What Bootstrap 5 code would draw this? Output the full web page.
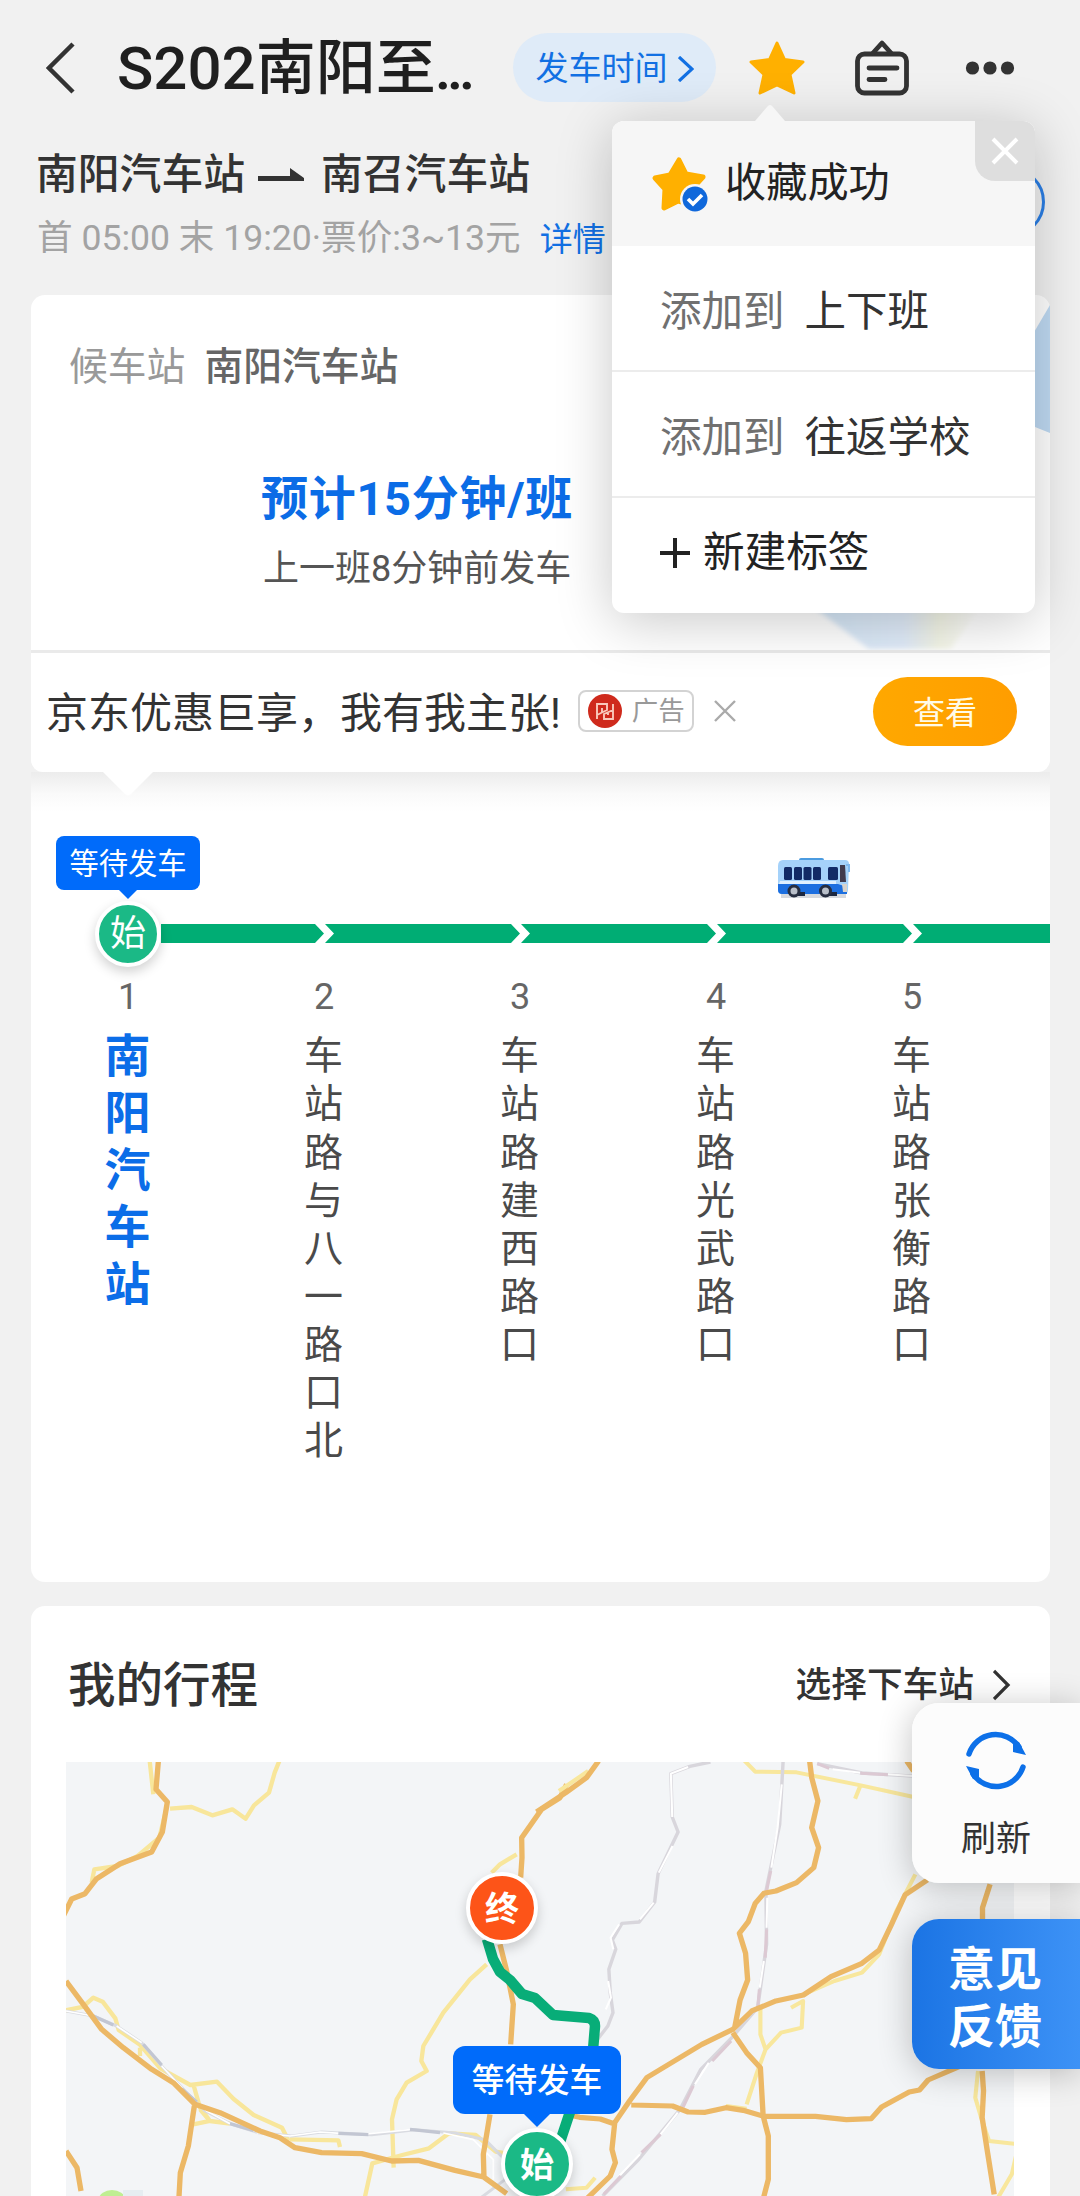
<!DOCTYPE html>
<html lang="zh-CN">
<head>
  <meta charset="UTF-8">
  <meta name="viewport" content="width=device-width, initial-scale=1.0">
  <title>S202 实时公交</title>
  <link href="https://cdn.jsdelivr.net/npm/bootstrap@5.3.0/dist/css/bootstrap.min.css" rel="stylesheet">
  <style>
    body {
      width: 1080px;
      height: 2196px;
      overflow: hidden;
      background: #f1f1f1;
      color: #333;
      font-family: Roboto, "Noto Sans CJK SC", sans-serif;
      line-height: 1;
    }
    svg { display: block; flex: none; }
    .fw-mid { font-weight: 500; }
    .blue { color: #1270e3; }

    .topbar { height: 135px; padding-left: 46px; }
    .line-title { font-size: 60px; color: #1f1f1f; width: 358px; margin-left: 41px; padding-top: 2px; }
    .line-title .dots { letter-spacing: -4.6px; margin-left: -1px; }
    .time-pill { width: 203px; height: 69px; margin-left: 38px; padding-top: 2px; font-size: 33px; background: #dfebf8; gap: 10px; }
    .route-row { height: 76px; padding: 4px 0 0 36px; font-size: 41.8px; }
    .info-row { height: 54px; padding: 2px 0 0 37px; font-size: 35.6px; color: #a3a3a3; }
    .info-row .blue { font-size: 33px; margin-left: 19px; }

    .page-body { padding: 30px 30px 0 31px; }
    .wait-card { height: 477px; border-radius: 14px 14px 12px 12px; }
    .wait-top { height: 355px; padding-top: 42px; }
    .wait-label { height: 60px; padding-left: 38px; font-size: 38.8px; color: #999; gap: 19px; }
    .wait-label b { font-weight: 500; color: #666; }
    .estimate { margin-top: 68px; padding-left: 230px; height: 66px; font-size: 47px; color: #0b6ce6; font-weight: 700; letter-spacing: .7px; }
    .last-bus { padding-left: 232px; height: 76px; font-size: 36px; color: #555; }
    .ad-row { height: 119px; border-top: 3px solid #eaeaea; padding: 0 33px 0 15px; font-size: 42px; }
    .ad-text { padding-top: 6px; }
    .ad-tag { width: 116px; height: 42px; border: 2px solid #d3d3d3; border-radius: 8px; font-size: 26.500px; color: #999; gap: 10px; padding-left: 8px; margin-left: 17px; }
    .ad-btn { width: 144px; height: 69px; padding-top: 3px; font-size: 32px; background: linear-gradient(90deg, #ffa800, #ff9d00); color: #fffbe8; }
    .ad-tail { left: 71px; top: 476px; z-index: 2; }
    .deco { left: 780px; top: 0; }

    .stops-card { height: 810px; border-radius: 0 0 14px 14px; background: linear-gradient(#ececec, #fafafa 22px, #fff 40px); }
    .stops-head { height: 200px; }
    .stop-list { width: 980px; margin-left: -1px; }
    .stop-item { width: 196px; }
    .stop-no { height: 48px; padding-top: 1px; font-size: 36px; color: #666; }
    .stop-name { font-size: 39px; color: #4a4a4a; writing-mode: vertical-rl; text-orientation: upright; line-height: 40px; letter-spacing: 9.1px; margin: 15px 9px 0 0; }
    .stop-name.current { font-size: 46px; color: #0b6de8; letter-spacing: 11px; font-weight: 700; margin-top: 12px; }
    .wait-bubble { left: 25px; top: 64px; width: 144px; height: 54px; padding-top: 3px; border-radius: 8px; font-size: 29.3px; background: #006bfa; }
    .bubble-tail { left: 50%; top: 100%; transform: translateX(-50%); }
    .round-pin { border-radius: 50%; border: 4px solid #fff; background: #1bb986; color: #fff; box-shadow: 0 5px 12px rgba(0, 0, 0, .18); }
    .start-pin { left: 64px; top: 129px; width: 66px; height: 66px; font-size: 36px; }

    .trip-card { height: 620px; margin-top: 24px; border-radius: 14px 14px 0 0; padding: 0 36px 0 35px; }
    .trip-head { height: 156px; padding-left: 2px; }
    .trip-title { font-size: 47.5px; font-weight: 500; padding-top: 6px; }
    .choose { font-size: 35.7px; font-weight: 500; gap: 19px; padding: 3px 3px 0 0; }
    .map-end { left: 400px; top: 110px; width: 72px; height: 72px; padding-top: 1px; font-size: 34px; background: #fd5418; }
    .map-start { left: 435px; top: 366px; width: 72px; height: 72px; padding-top: 2px; font-size: 34px; }
    .map-bubble { left: 387px; top: 284px; width: 168px; height: 68px; padding-top: 3px; border-radius: 12px; font-size: 32.6px; background: #006bfa; }

    .fav-panel { left: 612px; top: 121px; width: 423px; height: 492px; border-radius: 12px; background: #fff; box-shadow: 0 8px 55px rgba(0, 0, 0, .22); z-index: 5; }
    .fav-title { height: 125px; padding-left: 39px; background: #f6f6f6; border-radius: 12px 12px 0 0; color: #222; gap: 16px; font-size: 41.2px; }
    .fav-item { height: 126px; padding: 7px 0 0 48px; font-size: 41.5px; border-bottom: 2px solid #ececec; gap: 20px; }
    .fav-item .grey { color: #707070; }
    .fav-new { height: 106px; padding: 3px 0 0 48px; gap: 13px; font-size: 41.6px; color: #222; }
    .fav-close { right: 0; top: 0; width: 60px; height: 60px; background: #dedede; border-radius: 0 12px 0 20px; }
    .fav-tip { left: 141px; top: -16px; }
    .ring-btn { left: 975px; top: 167px; width: 70px; height: 70px; border: 3px solid #2b7fe6; border-radius: 50%; }

    .side-btn { right: 0; width: 168px; border-radius: 27px 0 0 27px; box-shadow: 0 4px 34px rgba(0, 0, 0, .24); }
    .refresh { top: 1703px; height: 180px; background: rgba(252, 252, 252, .97); font-size: 35px; padding-top: 26px; gap: 31px; }
    .feedback { top: 1919px; height: 150px; padding: 7px 2px 0 0; background: linear-gradient(90deg, #1b74e4, #3d92f6); font-size: 47px; line-height: 57px; }
  </style>
</head>
<body class="position-relative">

<header>
  <div class="topbar d-flex align-items-center">
    <svg width="30" height="52" viewBox="0 0 30 52" fill="none" stroke="#333" stroke-width="4.5"><path d="M27 2L3 26l24 24"/></svg>
    <div class="line-title fw-mid text-nowrap">S202南阳至<span class="dots">...</span></div>
    <div class="time-pill blue rounded-pill d-flex align-items-center justify-content-center">发车时间
      <svg width="16" height="26" viewBox="0 0 16 26" fill="none" stroke="#1270e3" stroke-width="3.2"><path d="M1 1l13 12L1 25"/></svg>
    </div>
    <svg width="56" height="54" viewBox="0 0 56 54" style="margin-left:33px"><path d="M28 2l7.5 16.500L54 21 41 33.500l4 18.500L28 44 11 52l4-18.500L2 21l18.500-2.500z" fill="#ffb000" stroke="#ffb000" stroke-width="3" stroke-linejoin="round"/></svg>
    <svg width="56" height="56" viewBox="0 0 56 56" fill="none" stroke="#333" stroke-width="4.800" stroke-linejoin="round" stroke-linecap="round" style="margin-left:49px"><rect x="3.500" y="14" width="49" height="39" rx="7"/><path d="M19 13l9-10 9 10M15 28h28M15 39.500h16"/></svg>
    <svg width="50" height="14" viewBox="0 0 50 14" fill="#333" style="margin-left:55px"><circle cx="7.500" cy="7" r="6.600"/><circle cx="25" cy="7" r="6.600"/><circle cx="42.500" cy="7" r="6.600"/></svg>
  </div>
  <div class="route-row fw-mid d-flex align-items-center">
    <span>南阳汽车站</span>
    <svg width="46" height="14" viewBox="0 0 46 14" fill="#333" style="margin:0 17px 0 13px"><path d="M0 8h32V0l14 10v3H0z"/></svg>
    <span>南召汽车站</span>
  </div>
  <div class="info-row d-flex align-items-center">
    <span class="text-nowrap">首 05:00 末 19:20·票价:3~13元</span><span class="blue">详情</span>
  </div>
</header>
<div class="ring-btn position-absolute"></div>

<main class="page-body">
  <section class="wait-card bg-white position-relative">
    <svg class="deco position-absolute" width="239" height="355" viewBox="0 0 239 355">
      <defs>
        <filter id="soft"><feGaussianBlur stdDeviation="2.500"/></filter>
        <linearGradient id="glow"><stop offset="0" stop-color="#d3e6f7"/><stop offset=".55" stop-color="#e0ebf9"/><stop offset=".75" stop-color="#f3f5e6"/><stop offset="1" stop-color="#fff"/></linearGradient>
      </defs>
      <path d="M239 10v128l-20-8V44z" fill="#bfdaf3"/>
      <path d="M0 310h170l-30 44H58z" fill="url(#glow)" filter="url(#soft)"/>
    </svg>
    <div class="wait-top">
      <div class="wait-label d-flex align-items-center"><span>候车站</span><b>南阳汽车站</b></div>
      <div class="estimate d-flex align-items-center">预计15分钟/班</div>
      <div class="last-bus d-flex align-items-center">上一班8分钟前发车</div>
    </div>
    <div class="ad-row d-flex align-items-center">
      <span class="ad-text text-nowrap">京东优惠巨享，我有我主张!</span>
      <div class="ad-tag d-flex align-items-center">
        <svg width="34" height="34" viewBox="0 0 34 34"><circle cx="17" cy="17" r="17" fill="#cf2a1c"/><path d="M9 25V10h10v6l-10 5M14 14v4M25 10v15h-9v-5l9-4M20 21v-3" fill="none" stroke="#f9c9bb" stroke-width="1.900"/></svg>广告
      </div>
      <svg width="24" height="24" viewBox="0 0 24 24" stroke="#aaa" stroke-width="2.400" style="margin-left:19px"><path d="M2 2l20 20M22 2L2 22"/></svg>
      <div class="ad-btn rounded-pill ms-auto d-flex align-items-center justify-content-center">查看</div>
    </div>
    <svg class="ad-tail position-absolute" width="52" height="26" viewBox="0 0 52 26"><path d="M0 0h52L29 23q-3 3-6 0z" fill="#fff"/></svg>
  </section>

  <section class="stops-card position-relative">
    <div class="stops-head position-relative">
      <!-- driving line, one arrow per stop -->
      <svg class="position-absolute" style="left:130px;top:85px" width="889" height="86" viewBox="0 0 889 86">
        <g fill="#00ad74">
          <path d="M0 67h154l9 9.500-9 9.500H0z"/>
          <path d="M164 67h186l9 9.500-9 9.500H164l9-9.500z"/>
          <path d="M360 67h186l9 9.500-9 9.500H360l9-9.500z"/>
          <path d="M556 67h186l9 9.500-9 9.500H556l9-9.500z"/>
          <path d="M752 67h137v19H752l9-9.500z"/>
        </g>
        <g transform="translate(616 0)">
          <rect x="4" y="37" width="65" height="4" fill="#d6d9de"/>
          <rect x="22" y="1" width="25" height="6" rx="2" fill="#4b9be0"/>
          <path d="M6 3h62q4 0 4 4l-1 26q0 4-4 4H5q-4 0-4-4V9q0-6 5-6z" fill="#a5d2fa"/>
          <path d="M1 27h60l9 3v7H5q-4 0-4-4z" fill="#1c6fe0"/>
          <path d="M3 24h56v3H2z" fill="#dff0ff"/>
          <path d="M63 8h5l1 17h-6z" fill="#413b4e"/>
          <path d="M69 8h3v7" fill="none" stroke="#7fb9f0" stroke-width="2"/>
          <path d="M65 27h5v8h-4z" fill="#d7d3cd"/>
          <g fill="#122a66"><rect x="7" y="10" width="8" height="13" rx="1.500"/><rect x="17" y="10" width="8" height="13" rx="1.500"/><rect x="26.500" y="10" width="8" height="13" rx="1.500"/><rect x="36" y="10" width="8" height="13" rx="1.500"/><rect x="51" y="10" width="10" height="13" rx="1.500"/></g>
          <path d="M20 37h8M52 37h8" stroke="#1b2740" stroke-width="4"/>
          <g fill="#b9bfc9" stroke="#272e40" stroke-width="3"><circle cx="17" cy="34" r="5"/><circle cx="48.500" cy="34" r="5"/></g>
        </g>
      </svg>
      <div class="wait-bubble position-absolute text-white d-flex align-items-center justify-content-center">等待发车
        <svg class="bubble-tail position-absolute" width="18" height="9" viewBox="0 0 18 9"><path d="M0 0h18L9 9z" fill="#006bfa"/></svg>
      </div>
      <div class="round-pin start-pin position-absolute d-flex align-items-center justify-content-center">始</div>
    </div>
    <div class="stop-list d-flex">
      <div class="stop-item d-flex flex-column align-items-center"><div class="stop-no d-flex align-items-center">1</div><div class="stop-name current">南阳汽车站</div></div>
      <div class="stop-item d-flex flex-column align-items-center"><div class="stop-no d-flex align-items-center">2</div><div class="stop-name">车站路与八一路口北</div></div>
      <div class="stop-item d-flex flex-column align-items-center"><div class="stop-no d-flex align-items-center">3</div><div class="stop-name">车站路建西路口</div></div>
      <div class="stop-item d-flex flex-column align-items-center"><div class="stop-no d-flex align-items-center">4</div><div class="stop-name">车站路光武路口</div></div>
      <div class="stop-item d-flex flex-column align-items-center"><div class="stop-no d-flex align-items-center">5</div><div class="stop-name">车站路张衡路口</div></div>
    </div>
  </section>

  <section class="trip-card bg-white">
    <div class="trip-head d-flex align-items-center justify-content-between">
      <span class="trip-title">我的行程</span>
      <span class="choose d-flex align-items-center">选择下车站
        <svg width="18" height="32" viewBox="0 0 18 32" fill="none" stroke="#333" stroke-width="3.200"><path d="M1 2l14 14L1 30"/></svg>
      </span>
    </div>
    <div class="position-relative">
      <svg width="948" height="435" viewBox="0 0 948 435" fill="none" stroke-linejoin="round">
        <rect width="948" height="435" fill="#f3f5f7"/>
        <!-- west half -->
        <g transform="translate(-6 -11) scale(.33333)">
          <g stroke="#f8e69b" stroke-width="13">
            <path d="M268 20l12 110M330 173l65-5 62 25 60-18 40 28 25-40 45-38 17-60 14-35M320 170l-22 90-65 55-60 30-70 10-8 40"/>
            <path d="M18 778l50-10 32-28 28 12 38 50 10 35 65 45 60 70 90 50 80-10 50 52 60 48 85 38 20 40M240 890v25M400 1000l20 70 30 40-50 10M420 1075l30 35 60 8M690 1165l145 3 5 20M1370 310l-50 30-25 25M1280 640l-50 45-80 100-60 100-6 45 16 30-60 35-30 50-14 60 5 145M915 1337l22-100 90-25 80-20 60-45 80 5 60 50 30 5"/>
          </g>
          <g stroke="#d9dbe1" stroke-width="9"><path d="M18 780l82 15 70 30 75 50 60 70 70 75 60 60 80 40 80 25 100 10 90-12 150 8 130-15 120 10 90 20 60 60v60l-80 60"/></g>
          <g stroke="#fff" stroke-width="5"><path d="M18 780l82 15M170 825l75 50M305 945l65 70M420 1060l20 20 70 38M590 1145l100 10 90-12 60 4M920 1149l130-13M1150 1146l90 20 60 60v60"/></g>
          <g stroke="#c2c6d2" stroke-width="10"><path d="M100 795l60 27M250 880l55 62M365 1013l45 40M510 1118l70 20M835 1147l90 4M1050 1135l90 10"/></g>
          <g stroke="#ecb866" stroke-width="16">
            <path d="M296 20l-8 95 34 38-15 90-32 60-95 35-70 45-35 45-40 16-27 55M18 690l52 70 55 75 65 55 85 65 65 40 65 65 75 25 120 55 60 20 45 30 80 15 120 3 90 22 80-2 110 30 86 20 69 50M403 1065l-18 120-24 80-5 90M18 1200l33 50 12 70M1520 100l-20 40-55 35-60 85 1 60-4 60M1320 580l20 80 20 100-8 120M1290 1090l-20 120 2 70"/>
          </g>
        </g>
        <ellipse cx="46" cy="437" rx="13" ry="9" fill="#bfee92"/><path d="M57 428h20v7H57z" fill="#e6edf1"/>
        <!-- east half -->
        <g transform="translate(474 -81) scale(.34436 .33333)">
          <g stroke="#f8e79d" stroke-width="12">
            <path d="M590 235l35 37 120 2 190 40 150 34M930 315l-15 38M140 270l-85 60M1090 580l-55 110-50 130-50 55-80 25-100 45M640 980v80l15 45-25 70-30 95M655 1105l45-50 60-15 4-80-35 20M540 1275l60 8M1272 1170l-8 80 20 70 20 60 90 10M1390 1390l-20 90-40 70M75 1525l60-5 25-30"/>
          </g>
          <g stroke="#d8d6dc" stroke-width="10"><path d="M495 243l-60 13-55 22 4 130 17 45-58 125-10 85-45 60-50 4-28 50 10 28-20 60 4 70 8 60-15 40-60 80M706 240l-10 190-40 200 2 160-26 190-75 90-90 95-60 120-120 150-105 110M805 248l130 28 160 10"/></g>
          <g stroke="#fff" stroke-width="6"><path d="M430 258l-50 20 4 130M385 495l-40 80M330 665l-40 50M230 730l-25 40 8 35M198 900l8 50-15 35M702 310l-12 130-18 120M660 650l-2 90M650 840l-12 80M490 1145l-40 65M400 1295l-50 65M290 1420l-60 65M850 265l80 10M1010 280l80 6"/></g>
          <g stroke="#dcc9d3" stroke-width="9"><path d="M670 570l-12 60M658 745l-4 85M637 925l-5 60M555 1080l-55 60M445 1215l-30 65M350 1360l-55 55M235 1485l-50 55M930 277l80 4M805 248l35 14"/></g>
          <g stroke="#ecb866" stroke-width="15.500">
            <path d="M170 240l-35 50-60 45-85 58M783 240l6 50 18 70-18 80 20 60-14 60-50 45-60 25-35 7-25 30-20 55-26 35 18 60 6 80-22 60-16 85M1065 240l20 30M1125 597l-65 45-40 90-35 75-50 40-90 40-80 55-80 18-70 30-55 55-90 45-160 100-50 70-43 65-8 80 10 40-15 40-70 70-20 25M560 1055l40 60 40 45 8 145 15 60v130l-15 60M265 1272l120 3 45 18 50 1 60-14 50 8 60 18h150l90 10 72-3 30-35 80-45 30-6 25-30 90-40M85 1302l30 7 60 5 42 15M1307 610l-22 70v40M1284 1170l4 60-4 80 15 100 20 130"/>
          </g>
        </g>
        <path d="M421 177l6 20 7 13 10 8 12 14 13 4 18 17 36 3q6 2 6 8l-2 24M504 350l-10 30" stroke="#08ad78" stroke-width="10.500"/>
      </svg>
      <div class="round-pin map-end position-absolute fw-bold d-flex align-items-center justify-content-center">终</div>
      <div class="round-pin map-start position-absolute fw-bold d-flex align-items-center justify-content-center">始</div>
      <div class="map-bubble position-absolute text-white fw-mid d-flex align-items-center justify-content-center">等待发车
        <svg class="bubble-tail position-absolute" width="26" height="13" viewBox="0 0 26 13"><path d="M0 0h26L13 13z" fill="#006bfa"/></svg>
      </div>
    </div>
  </section>
</main>

<!-- favourite panel -->
<div class="fav-panel position-absolute">
  <svg class="fav-tip position-absolute" width="34" height="16" viewBox="0 0 34 16"><path d="M2 16L14 2q3-4 6 0l12 14z" fill="#f6f6f6"/></svg>
  <div class="fav-title d-flex align-items-center">
    <svg width="58" height="56" viewBox="0 0 58 56">
      <path d="M28 4l7 14 17 3-11 12 2 16-16-4-14 7 1-19L4 22l15-3z" fill="#ffb000" stroke="#ffb000" stroke-width="5" stroke-linejoin="round"/>
      <circle cx="44" cy="43" r="15" fill="#f6f6f6"/><circle cx="44" cy="43" r="12.500" fill="#1068db"/>
      <path d="M37 43l5 5 9-9" fill="none" stroke="#fff" stroke-width="3.600"/>
    </svg>收藏成功
  </div>
  <div class="fav-close position-absolute d-flex align-items-center justify-content-center">
    <svg width="28" height="28" viewBox="0 0 28 28" stroke="#fff" stroke-width="4"><path d="M2 2l24 24M26 2L2 26"/></svg>
  </div>
  <div class="fav-item d-flex align-items-center"><span class="grey">添加到</span><span>上下班</span></div>
  <div class="fav-item d-flex align-items-center"><span class="grey">添加到</span><span>往返学校</span></div>
  <div class="fav-new d-flex align-items-center">
    <svg width="30" height="30" viewBox="0 0 30 30" stroke="#222" stroke-width="4"><path d="M15 0v30M0 15h30"/></svg>新建标签
  </div>
</div>

<div class="side-btn refresh position-absolute d-flex flex-column align-items-center">
  <svg width="62" height="62" viewBox="0 0 62 62">
    <g fill="none" stroke="#0d70e8" stroke-width="5.500" stroke-linecap="round"><path d="M4 25A28 28 0 0 1 54 18M58 38A28 28 0 0 1 8 45"/></g>
    <path d="M48 12l6 1 7 13-13-3zM14 51l-6-1-7-13 13 3z" fill="#0d70e8"/>
  </svg>
  <span>刷新</span>
</div>
<div class="side-btn feedback position-absolute text-white fw-bold d-flex flex-column align-items-center justify-content-center">
  <span>意见</span><span>反馈</span>
</div>

<script src="https://cdn.jsdelivr.net/npm/bootstrap@5.3.0/dist/js/bootstrap.bundle.min.js"></script>
</body>
</html>
